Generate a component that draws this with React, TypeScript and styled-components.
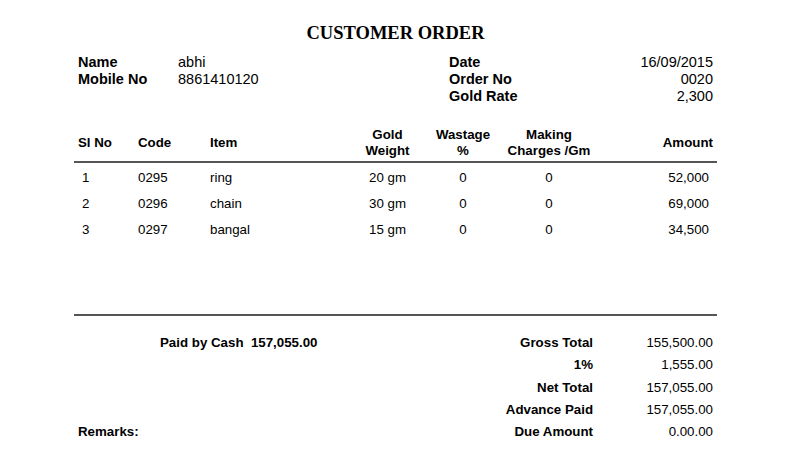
import React from 'react'
import styled, {createGlobalStyle} from 'styled-components'

const GlobalStyle = createGlobalStyle`
  body {
    margin: 0;
    background: #fff;
    color: #000;
    font-family: 'Liberation Sans', Arial, sans-serif;
  }
`

const Page = styled.div`
  width: 643px;
  margin-left: 74px;
  padding-top: 22px;
`

const Title = styled.h1`
  margin: 0;
  text-align: center;
  font-family: 'Liberation Serif', 'Times New Roman', serif;
  font-size: 18.5px;
  font-weight: 700;
  line-height: 22px;
`

const Info = styled.div`
  display: flex;
  padding: 0 4px;
  margin-top: 10px;
  font-size: 14.5px;
  line-height: 17px;
`

const InfoLeft = styled.div`
  display: grid;
  grid-template-columns: 100px auto;
  align-content: start;
  width: 371px;
`

const InfoRight = styled.div`
  display: grid;
  grid-template-columns: 1fr auto;
  align-content: start;
  flex: 1;
`

const Label = styled.div`
  font-weight: 700;
`

const Value = styled.div<{$right?: boolean}>`
  text-align: ${p => (p.$right ? 'right' : 'left')};
`

const cols = '60px 72px 140px 75px 76px 96px 1fr'

const HeadRow = styled.div`
  display: grid;
  grid-template-columns: ${cols};
  align-items: center;
  margin-top: 22px;
  padding: 0 4px 2px;
  border-bottom: 2px solid #555;
  font-size: 13.3px;
  font-weight: 700;
  line-height: 16px;
`

const Cell = styled.div<{$align?: 'left' | 'center' | 'right'; $pad?: number}>`
  text-align: ${p => p.$align || 'left'};
  padding-left: ${p => (p.$align === 'right' ? 0 : p.$pad || 0)}px;
  padding-right: ${p => (p.$align === 'right' ? p.$pad || 0 : 0)}px;
`

const Body = styled.div`
  height: 150px;
  padding: 1px 4px 0;
  border-bottom: 2px solid #555;
`

const Row = styled.div`
  display: grid;
  grid-template-columns: ${cols};
  align-items: center;
  height: 26px;
  font-size: 13.3px;
`

const Footer = styled.div`
  display: flex;
  padding: 16px 4px 0;
  font-size: 13.3px;
  line-height: 22.3px;
`

const FooterLeft = styled.div`
  display: flex;
  flex-direction: column;
  justify-content: space-between;
  width: 400px;
`

const PaidBy = styled.div`
  padding-left: 82px;
  font-weight: 700;
  white-space: pre;
`

const Remarks = styled.div`
  font-weight: 700;
`

const Totals = styled.div`
  display: grid;
  grid-template-columns: 1fr 120px;
  flex: 1;
`

const TotalLabel = styled.div`
  font-weight: 700;
  text-align: right;
`

const TotalValue = styled.div`
  text-align: right;
`

const items = [
  {no: '1', code: '0295', item: 'ring', weight: '20 gm', amount: '52,000'},
  {no: '2', code: '0296', item: 'chain', weight: '30 gm', amount: '69,000'},
  {no: '3', code: '0297', item: 'bangal', weight: '15 gm', amount: '34,500'},
]

const totals = [
  ['Gross Total', '155,500.00'],
  ['1%', '1,555.00'],
  ['Net Total', '157,055.00'],
  ['Advance Paid', '157,055.00'],
  ['Due Amount', '0.00.00'],
]

export default function App() {
  return (
    <>
      <GlobalStyle />
      <Page>
        <Title>CUSTOMER ORDER</Title>
        <Info>
          <InfoLeft>
            <Label>Name</Label>
            <Value>abhi</Value>
            <Label>Mobile No</Label>
            <Value>8861410120</Value>
          </InfoLeft>
          <InfoRight>
            <Label>Date</Label>
            <Value $right>16/09/2015</Value>
            <Label>Order No</Label>
            <Value $right>0020</Value>
            <Label>Gold Rate</Label>
            <Value $right>2,300</Value>
          </InfoRight>
        </Info>
        <HeadRow>
          <Cell>Sl No</Cell>
          <Cell>Code</Cell>
          <Cell>Item</Cell>
          <Cell $align='center'>Gold<br />Weight</Cell>
          <Cell $align='center'>Wastage<br />%</Cell>
          <Cell $align='center'>Making<br />Charges /Gm</Cell>
          <Cell $align='right'>Amount</Cell>
        </HeadRow>
        <Body>
          {items.map(r => (
            <Row key={r.no}>
              <Cell $pad={4}>{r.no}</Cell>
              <Cell>{r.code}</Cell>
              <Cell>{r.item}</Cell>
              <Cell $align='center'>{r.weight}</Cell>
              <Cell $align='center'>0</Cell>
              <Cell $align='center'>0</Cell>
              <Cell $align='right' $pad={4}>{r.amount}</Cell>
            </Row>
          ))}
        </Body>
        <Footer>
          <FooterLeft>
            <PaidBy>Paid by Cash  157,055.00</PaidBy>
            <Remarks>Remarks:</Remarks>
          </FooterLeft>
          <Totals>
            {totals.map(([label, value]) => (
              <React.Fragment key={label}>
                <TotalLabel>{label}</TotalLabel>
                <TotalValue>{value}</TotalValue>
              </React.Fragment>
            ))}
          </Totals>
        </Footer>
      </Page>
    </>
  )
}
